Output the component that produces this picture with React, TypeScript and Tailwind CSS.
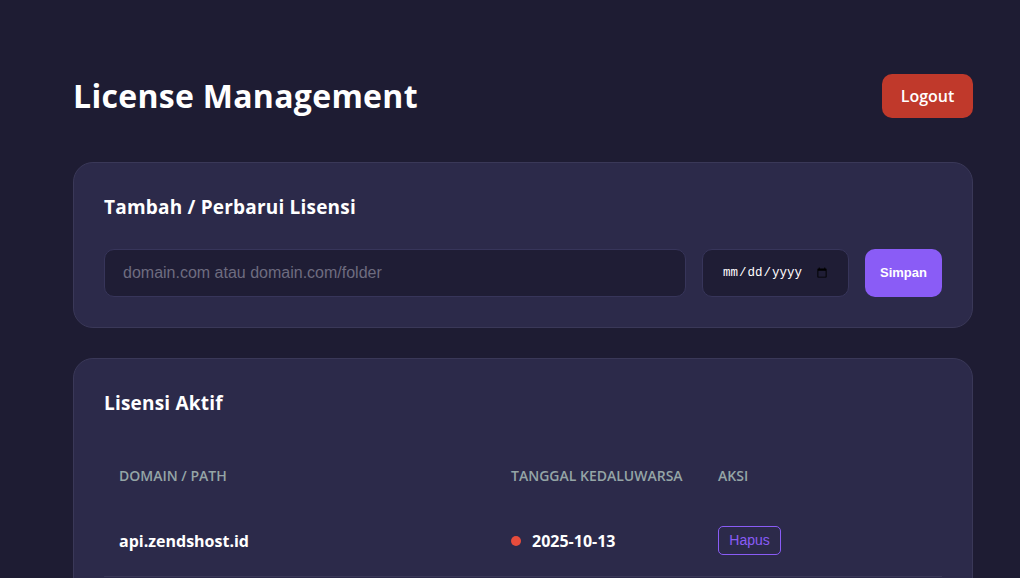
export default function App() {
  const heading = { fontFamily: '"Open Sans", "Noto Sans", sans-serif' };
  const arial = { fontFamily: '"Liberation Sans", Arial, sans-serif' };
  return (
    <div className="min-h-screen w-full bg-[#1e1c33] text-white" style={heading}>
      <div className="ml-[73px] w-[900px] pt-[74px]">
        <header className="flex items-center justify-between">
          <h1 className="text-[32px] font-bold leading-[44px] tracking-[0.3px]">License Management</h1>
          <button className="h-[44px] w-[91px] rounded-[10px] bg-[#c0392b] text-[16px] font-semibold text-white">
            Logout
          </button>
        </header>

        <section className="mt-[44px] rounded-[20px] border border-[#3a3858] bg-[#2c2a4a] px-[30px] pt-[29px] pb-[30px]">
          <h2 className="text-[19px] font-bold leading-[30px] tracking-[0.2px]">Tambah / Perbarui Lisensi</h2>
          <div className="mt-[27px] flex gap-4">
            <input
              type="text"
              placeholder="domain.com atau domain.com/folder"
              className="h-[48px] flex-1 rounded-[10px] border border-[#37355a] bg-[#1f1d35] px-[18px] text-[16px] text-white outline-none placeholder:text-[#6e6c80]"
              style={arial}
            />
            <input
              type="date"
              className="h-[48px] w-[147px] rounded-[10px] border border-[#37355a] bg-[#1f1d35] pl-[19px] pr-[18px] text-[12.5px] text-white outline-none"
              style={{ fontFamily: '"Liberation Mono", monospace' }}
            />
            <button className="h-[48px] w-[77px] rounded-[10px] bg-[#8a5cf6] text-[13px] font-bold text-white" style={arial}>
              Simpan
            </button>
          </div>
        </section>

        <section className="mt-[30px] rounded-[20px] border border-[#3a3858] bg-[#2c2a4a] px-[30px] pt-[29px] pb-[30px]">
          <h2 className="text-[19px] font-bold leading-[30px] tracking-[0.2px]">Lisensi Aktif</h2>
          <table className="mt-[32px] w-full border-collapse text-left">
            <thead>
              <tr className="text-[14px] uppercase text-[#95a5a6]">
                <th className="w-[392px] px-[15px] py-[15px] font-semibold">Domain / Path</th>
                <th className="w-[207px] px-[15px] py-[15px] font-semibold">Tanggal Kedaluwarsa</th>
                <th className="px-[15px] py-[15px] font-semibold">Aksi</th>
              </tr>
            </thead>
            <tbody>
              <tr className="border-b border-[#3a3858]">
                <td className="px-[15px] pt-[25px] pb-[21px] text-[16px] font-bold">api.zendshost.id</td>
                <td className="px-[15px] pt-[25px] pb-[21px] text-[16px] font-bold">
                  <span className="flex items-center gap-[11px]">
                    <span className="h-[10px] w-[10px] rounded-full bg-[#e74c3c]" />
                    2025-10-13
                  </span>
                </td>
                <td className="px-[15px] pt-[25px] pb-[21px]">
                  <button className="h-[29px] w-[63px] rounded-[5px] border border-[#8a5cf6] text-[14px] text-[#8a5cf6]" style={arial}>
                    Hapus
                  </button>
                </td>
              </tr>
            </tbody>
          </table>
        </section>
      </div>
    </div>
  );
}
